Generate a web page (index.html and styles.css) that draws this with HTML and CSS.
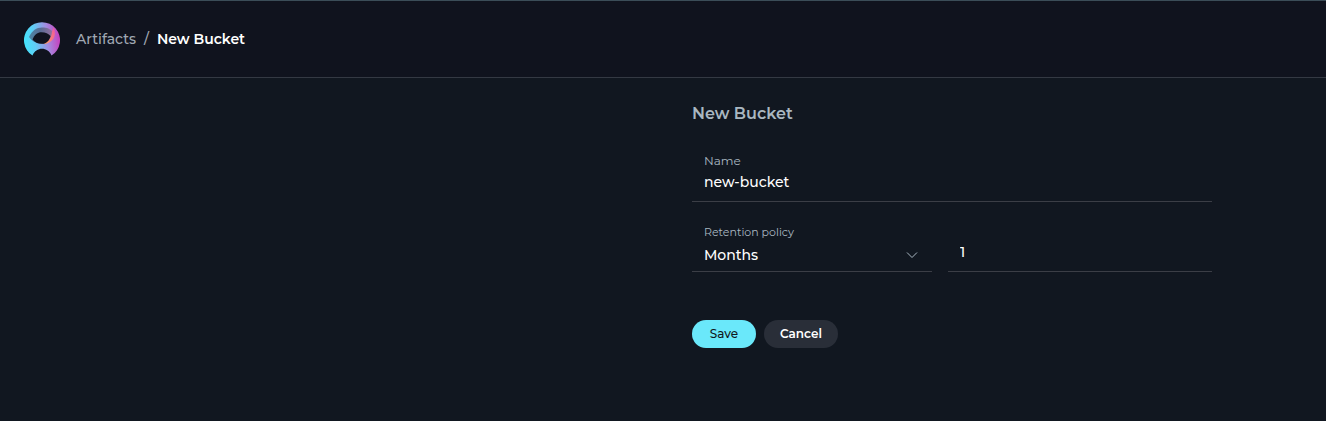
FILE: index.html
```html
<!DOCTYPE html>
<html lang="en">
<head>
<meta charset="utf-8">
<title>New Bucket</title>
<link rel="stylesheet" href="styles.css">
</head>
<body>
<header class="header">
  <a class="logo" href="#" aria-label="Home">
    <svg width="36" height="36" viewBox="0 -2 36 36" aria-hidden="true">
      <defs>
        <linearGradient id="ring" x1="0" y1="0.6" x2="1" y2="0.5">
          <stop offset="0" stop-color="#43e4fc"/>
          <stop offset="0.3" stop-color="#60cdf5"/>
          <stop offset="0.65" stop-color="#a28ce0"/>
          <stop offset="1" stop-color="#c73fbd"/>
        </linearGradient>
        <linearGradient id="band" x1="0" y1="0" x2="1" y2="0">
          <stop offset="0" stop-color="#4b86a4"/>
          <stop offset="0.5" stop-color="#5b6c94"/>
          <stop offset="1" stop-color="#94709f"/>
        </linearGradient>
        <linearGradient id="flare" x1="1" y1="0" x2="0" y2="1">
          <stop offset="0" stop-color="#ee57a0"/>
          <stop offset="0.6" stop-color="#fb7f78"/>
          <stop offset="1" stop-color="#ffad5c"/>
        </linearGradient>
      </defs>
      <path fill="url(#ring)" d="M8.500 32.500A18 18 0 1 1 27.500 32.500C25.500 28 22 25.800 18 25.800S10.500 28 8.500 32.500Z"/>
      <path fill="url(#band)" d="M5 14C8 7.500 12.500 4.500 18 4.500S26 6 28.500 8.500C28 15 25.500 20.800 19 21C13 20.800 8 18.500 5 14Z"/>
      <path fill="url(#flare)" d="M29.500 4.500C33.500 12 29 20.500 19.500 21.200C25 17.500 27.500 14.500 28 9Z"/>
      <path fill="#10131e" d="M8.500 16.500C10.500 11.500 13.500 9.300 17.500 9.300S24.500 10.800 26.500 13C25.500 17.500 22.500 20.800 18 20.800C14 20.800 10.500 19.300 8.500 16.500Z"/>
    </svg>
  </a>
  <nav class="crumbs" aria-label="Breadcrumb">
    <a class="crumb" href="#">Artifacts</a>
    <span class="separator">/</span>
    <span class="current">New Bucket</span>
  </nav>
</header>
<main class="main">
  <form class="form">
    <h1 class="title">New Bucket</h1>
    <div class="field">
      <label class="label" for="name">Name</label>
      <input class="control" id="name" type="text" value="new-bucket">
    </div>
    <div class="row">
      <div class="field field-select">
        <label class="label label-small" for="policy">Retention policy</label>
        <div class="select-box">
          <select class="control" id="policy">
            <option>Days</option>
            <option>Weeks</option>
            <option selected>Months</option>
            <option>Years</option>
          </select>
          <svg class="chevron" width="12" height="8" viewBox="0 0 12 8" aria-hidden="true"><path d="M1 1.500L6 6.500L11 1.500" fill="none" stroke="#a9b7c1" stroke-width="1"/></svg>
        </div>
      </div>
      <div class="field field-count">
        <input class="control" type="text" inputmode="numeric" value="1" aria-label="Retention period">
      </div>
    </div>
    <div class="actions">
      <button class="button primary" type="submit">Save</button>
      <button class="button secondary" type="button">Cancel</button>
    </div>
  </form>
</main>
</body>
</html>
```
FILE: styles.css
```css
* {
  box-sizing: border-box;
}

body {
  margin: 0;
  min-height: 100vh;
  background: #111720;
  color: #fff;
  font: 500 14px/20px Montserrat, Inter, sans-serif;
}

.header {
  display: flex;
  align-items: center;
  gap: 16px;
  padding: 20px 24px;
  background: #10131e;
  border-top: 1px solid #3b4d58;
  border-bottom: 1px solid #343943;
}

.logo {
  display: flex;
}

.crumbs {
  display: flex;
  gap: 8px;
}

.crumb,
.separator {
  color: #a0a8b3;
  text-decoration: none;
}

.current {
  font-weight: 600;
}

.main {
  display: flex;
  justify-content: flex-end;
  padding: 24px 114px;
}

.form {
  width: 100%;
  max-width: 520px;
}

.title {
  margin: 0 0 26px;
  color: #a9b7c1;
  font-size: 16px;
  font-weight: 600;
  line-height: 24px;
}

.field {
  border-bottom: 1px solid #3b3e46;
  padding: 0 12px 7px;
}

.label {
  display: block;
  color: #a9b7c1;
  font-size: 12px;
  font-weight: 400;
  line-height: 18px;
}

.label-small {
  font-size: 11px;
  line-height: 20px;
}

.control {
  display: block;
  width: 100%;
  height: 24px;
  margin: 0;
  padding: 0;
  border: 0;
  outline: 0;
  appearance: none;
  background: transparent;
  color: #fff;
  font: inherit;
}

.row {
  display: grid;
  grid-template-columns: minmax(0, 240fr) minmax(0, 264fr);
  gap: 16px;
  margin-top: 20px;
}

.field-select {
  padding-bottom: 3px;
}

.field-count {
  display: flex;
  align-items: flex-end;
}

.select-box {
  display: grid;
  align-items: center;
  height: 26px;
}

.select-box > * {
  grid-area: 1 / 1;
}

.chevron {
  justify-self: end;
  margin-right: 2px;
  pointer-events: none;
}

.actions {
  display: flex;
  gap: 8px;
  margin-top: 48px;
}

.button {
  height: 28px;
  padding: 0 16px;
  border: 0;
  border-radius: 14px;
  font: 600 12px/16px Montserrat, Inter, sans-serif;
}

.primary {
  min-width: 64px;
  background: #6ae8fa;
  color: #111720;
  font-weight: 500;
}

.secondary {
  background: #292e38;
  color: #fff;
}
```
